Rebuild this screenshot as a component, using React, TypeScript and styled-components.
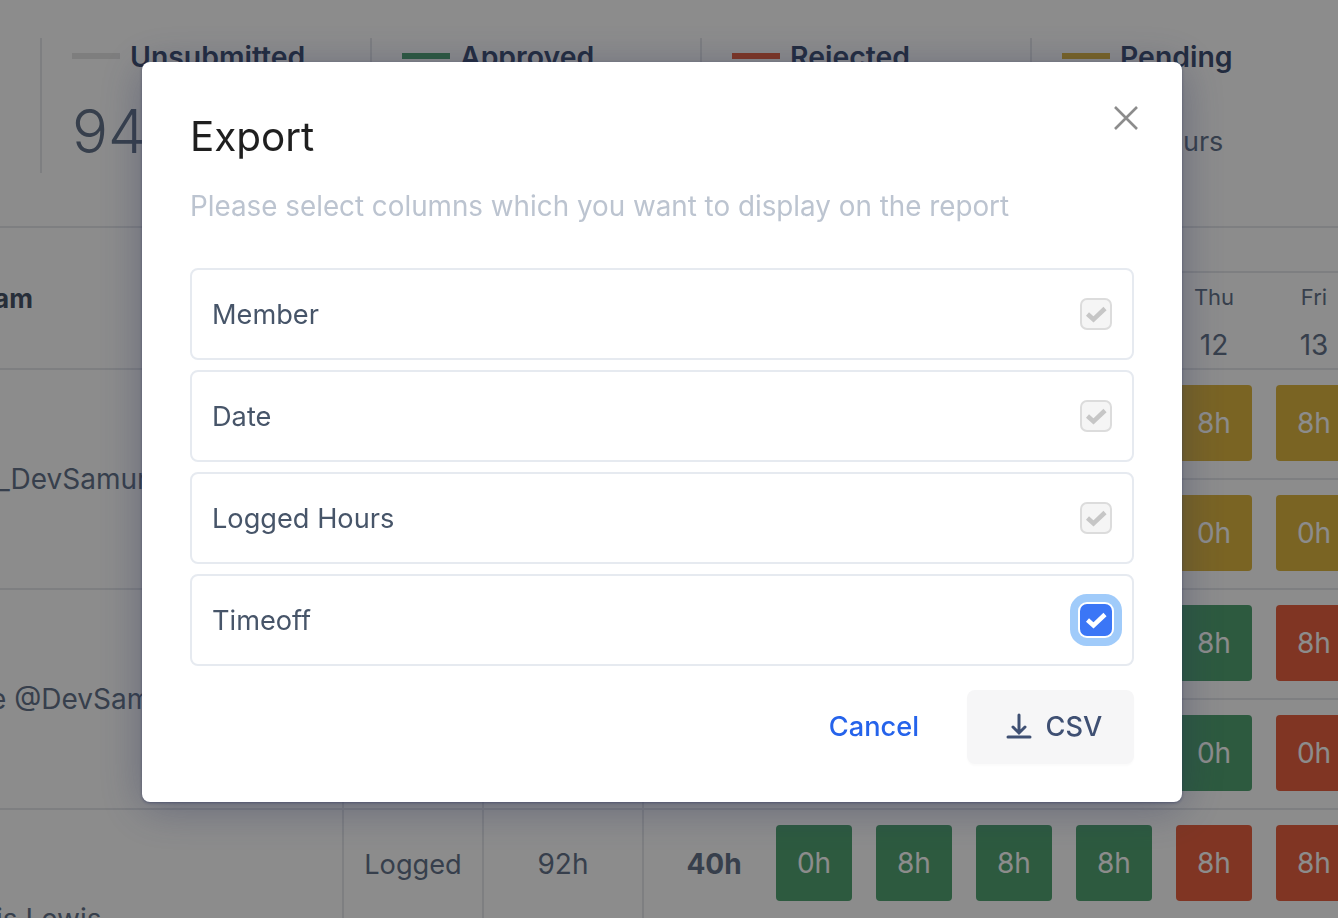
import React from 'react';
import styled, { createGlobalStyle } from 'styled-components';

const GlobalStyle = createGlobalStyle`
  html, body {
    margin: 0;
    padding: 0;
    height: 918px;
    overflow: hidden;
    background: #fff;
    font-family: Inter, "Noto Sans", sans-serif;
  }
  * { box-sizing: border-box; }
`

const Page = styled.div`
  width: 1338px;
  height: 918px;
  overflow: hidden;
  padding-top: 38px;
  color: #475569;
`

const StatsBar = styled.div`
  display: flex;
  margin-left: 40px;
  height: 135px;
  margin-bottom: 53px;
`

const Stat = styled.div`
  width: 330px;
  flex-shrink: 0;
  border-left: 2px solid #e5e7eb;
  padding-left: 30px;
`

const StatHead = styled.div`
  display: flex;
  align-items: center;
  gap: 10px;
  height: 36px;
`

const StatBarMark = styled.span<{ $color: string }>`
  width: 48px;
  height: 6px;
  background: ${p => p.$color};
`

const StatLabel = styled.span`
  font-size: 28.4px;
  font-weight: 600;
  color: #3f5073;
`

const StatValue = styled.div`
  display: flex;
  align-items: flex-end;
  gap: 14px;
  margin-top: 21px;
`

const StatNumber = styled.span`
  font-size: 60px;
  font-weight: 300;
  line-height: 72px;
  color: #64748b;
`

const StatUnit = styled.span`
  font-size: 27px;
  line-height: 34px;
  margin-bottom: 8px;
  color: #64748b;
`

const Table = styled.div`
  border-top: 2px solid #e5e7eb;
`

const HeadRow = styled.div`
  display: grid;
  grid-template-columns: 342px 1fr;
  height: 142px;
  border-bottom: 2px solid #e5e7eb;
`

const TeamCell = styled.div`
  display: flex;
  align-items: center;
  font-size: 26px;
  font-weight: 700;
  color: #475569;
  overflow: hidden;
`

const TeamText = styled.span`
  margin-left: -37px;
`

const HeadRight = styled.div`
  display: flex;
  flex-direction: column;
`

const HeadTop = styled.div`
  height: 45px;
  border-bottom: 2px solid #e5e7eb;
`

const Days = styled.div`
  display: flex;
  gap: 24px;
  padding-left: 434px;
`

const Day = styled.div`
  width: 76px;
  flex-shrink: 0;
  display: flex;
  flex-direction: column;
  align-items: center;
  padding-top: 10px;
  color: #64748b;
`

const DayName = styled.span`
  font-size: 22px;
  line-height: 28px;
`

const DayNumber = styled.span`
  font-size: 28px;
  line-height: 34px;
  margin-top: 17px;
`

const MemberRow = styled.div`
  display: grid;
  grid-template-columns: 342px 1fr;
  height: 220px;
  border-bottom: 2px solid #e5e7eb;
`

const NameCell = styled.div`
  display: flex;
  align-items: center;
  overflow: hidden;
  white-space: nowrap;
  font-size: 28px;
  color: #64748b;
`

const NameText = styled.span<{ $shift: number }>`
  margin-left: ${p => p.$shift}px;
`

const SubRows = styled.div`
  display: flex;
  flex-direction: column;
`

const SubRow = styled.div`
  display: flex;
  flex: 1;
  border-left: 2px solid #e5e7eb;
  &:not(:last-child) {
    border-bottom: 2px solid #e5e7eb;
  }
`

const LabelCell = styled.div`
  width: 140px;
  display: flex;
  align-items: center;
  justify-content: center;
  border-right: 2px solid #e5e7eb;
  font-size: 27.2px;
  color: #64748b;
`

const HoursCell = styled(LabelCell)`
  width: 160px;
  font-size: 28px;
`

const TotalCell = styled.div`
  width: 132px;
  padding-left: 8px;
  display: flex;
  align-items: center;
  justify-content: center;
  font-size: 28px;
  font-weight: 700;
  color: #64748b;
`

const Tiles = styled.div`
  display: flex;
  align-items: center;
  gap: 24px;
  padding-bottom: 2px;
`

const Tile = styled.div<{ $color: string }>`
  width: 76px;
  height: 76px;
  flex-shrink: 0;
  display: flex;
  align-items: center;
  justify-content: center;
  border-radius: 4px;
  background: ${p => p.$color};
  color: #fff;
  font-size: 28px;
`

const Overlay = styled.div`
  position: fixed;
  inset: 0;
  background: rgba(0, 0, 0, 0.45);
`

const Modal = styled.div`
  position: fixed;
  left: 142px;
  top: 62px;
  width: 1040px;
  height: 740px;
  padding: 48px;
  border-radius: 8px;
  background: #fff;
  box-shadow: 0 6px 44px rgba(40, 48, 90, 0.38), 0 1px 3px rgba(40, 48, 90, 0.5);
`

const CloseButton = styled.button`
  position: absolute;
  top: 42px;
  right: 42px;
  width: 28px;
  height: 28px;
  padding: 0;
  border: 0;
  background: none;
  color: #8c8c8c;
`

const Title = styled.h2`
  margin: 0;
  font-size: 40.4px;
  line-height: 54px;
  font-weight: 400;
  color: #1f1f1f;
`

const Subtitle = styled.p`
  margin: 25px 0 0;
  font-size: 27.8px;
  line-height: 34px;
  color: #bcc4d0;
`

const Options = styled.div`
  display: flex;
  flex-direction: column;
  gap: 10px;
  margin-top: 45px;
`

const Option = styled.label`
  display: flex;
  align-items: center;
  justify-content: space-between;
  height: 92px;
  padding: 0 20px;
  border: 2px solid #e6eaf0;
  border-radius: 8px;
  font-size: 27.2px;
  color: #475569;
`

const CheckBox = styled.span<{ $active?: boolean }>`
  width: 32px;
  height: 32px;
  display: flex;
  flex-shrink: 0;
  border-radius: 7px;
  border: ${p => (p.$active ? '0' : '2px solid #dcdcdc')};
  background: ${p => (p.$active ? '#3b76f6' : '#f5f5f5')};
  color: ${p => (p.$active ? '#fff' : '#c6c6c6')};
  box-shadow: ${p => (p.$active ? '0 0 0 2px #fff, 0 0 0 10px #a0cbfa' : 'none')};
`

const CheckIcon = styled.svg<{ $active?: boolean }>`
  width: 32px;
  height: 32px;
  flex-shrink: 0;
  margin: ${p => (p.$active ? '0' : '-2px')};
`

const Footer = styled.div`
  display: flex;
  justify-content: flex-end;
  align-items: center;
  gap: 48px;
  margin-top: 24px;
`

const CancelButton = styled.button`
  padding: 0 0 2px;
  border: 0;
  background: none;
  font: inherit;
  font-size: 27.2px;
  font-weight: 500;
  color: #2563eb;
`

const CsvButton = styled.button`
  width: 167px;
  height: 74px;
  display: flex;
  align-items: center;
  justify-content: center;
  gap: 14px;
  padding: 0 0 2px 7px;
  border: 0;
  border-radius: 8px;
  background: #f6f6f7;
  box-shadow: 0 2px 2px rgba(0, 0, 0, 0.02);
  font: inherit;
  font-size: 27.2px;
  font-weight: 500;
  color: #3f5073;
`

const YELLOW = '#deb641'
const GREEN = '#52a473'
const RED = '#e96240'

const STATS = [
  { label: 'Unsubmitted', color: '#e5e5e5', value: '94', unit: 'hours' },
  { label: 'Approved', color: GREEN, value: '80', unit: 'hours' },
  { label: 'Rejected', color: RED, value: '16', unit: 'hours' },
  { label: 'Pending', color: YELLOW, value: '40', unit: 'hours' },
]

const DAYS = [
  { name: 'Sun', date: 8 },
  { name: 'Mon', date: 9 },
  { name: 'Tue', date: 10 },
  { name: 'Wed', date: 11 },
  { name: 'Thu', date: 12 },
  { name: 'Fri', date: 13 },
]

const MEMBERS = [
  {
    name: 'Samuel_DevSamurai',
    shift: -101,
    rows: [
      { label: 'Logged', hours: '92h', total: '40h', tiles: ['8h', '8h', '8h', '8h', '8h', '8h'], colors: [GREEN, GREEN, GREEN, GREEN, YELLOW, YELLOW] },
      { label: 'Timeoff', hours: '0h', total: '0h', tiles: ['0h', '0h', '0h', '0h', '0h', '0h'], colors: [GREEN, GREEN, GREEN, GREEN, YELLOW, YELLOW] },
    ],
  },
  {
    name: 'Julie @DevSamurai',
    shift: -56,
    rows: [
      { label: 'Logged', hours: '92h', total: '40h', tiles: ['8h', '8h', '8h', '8h', '8h', '8h'], colors: [GREEN, GREEN, GREEN, GREEN, GREEN, RED] },
      { label: 'Timeoff', hours: '0h', total: '0h', tiles: ['0h', '0h', '0h', '0h', '0h', '0h'], colors: [GREEN, GREEN, GREEN, GREEN, GREEN, RED] },
    ],
  },
  {
    name: 'Chris Lewis',
    shift: -52,
    rows: [
      { label: 'Logged', hours: '92h', total: '40h', tiles: ['0h', '8h', '8h', '8h', '8h', '8h'], colors: [GREEN, GREEN, GREEN, GREEN, RED, RED] },
      { label: 'Timeoff', hours: '0h', total: '0h', tiles: ['0h', '0h', '0h', '0h', '0h', '0h'], colors: [GREEN, GREEN, GREEN, GREEN, RED, RED] },
    ],
  },
]

const OPTIONS = ['Member', 'Date', 'Logged Hours', 'Timeoff']

function App() {
  return (
    <>
      <GlobalStyle />
      <Page>
        <StatsBar>
          {STATS.map(stat => (
            <Stat key={stat.label}>
              <StatHead>
                <StatBarMark $color={stat.color} />
                <StatLabel>{stat.label}</StatLabel>
              </StatHead>
              <StatValue>
                <StatNumber>{stat.value}</StatNumber>
                <StatUnit>{stat.unit}</StatUnit>
              </StatValue>
            </Stat>
          ))}
        </StatsBar>
        <Table>
          <HeadRow>
            <TeamCell><TeamText>Team</TeamText></TeamCell>
            <HeadRight>
              <HeadTop />
              <Days>
                {DAYS.map(day => (
                  <Day key={day.name}>
                    <DayName>{day.name}</DayName>
                    <DayNumber>{day.date}</DayNumber>
                  </Day>
                ))}
              </Days>
            </HeadRight>
          </HeadRow>
          {MEMBERS.map(member => (
            <MemberRow key={member.name}>
              <NameCell>
                <NameText $shift={member.shift}>{member.name}</NameText>
              </NameCell>
              <SubRows>
                {member.rows.map(row => (
                  <SubRow key={row.label}>
                    <LabelCell>{row.label}</LabelCell>
                    <HoursCell>{row.hours}</HoursCell>
                    <TotalCell>{row.total}</TotalCell>
                    <Tiles>
                      {row.tiles.map((tile, idx) => (
                        <Tile key={idx} $color={row.colors[idx]}>{tile}</Tile>
                      ))}
                    </Tiles>
                  </SubRow>
                ))}
              </SubRows>
            </MemberRow>
          ))}
        </Table>
      </Page>
      <Overlay />
      <Modal>
        <CloseButton aria-label="Close">
          <svg width="28" height="28" viewBox="0 0 28 28" stroke="currentColor" strokeWidth="2.6" fill="none">
            <path d="M3 3l22 22M25 3L3 25" />
          </svg>
        </CloseButton>
        <Title>Export</Title>
        <Subtitle>Please select columns which you want to display on the report</Subtitle>
        <Options>
          {OPTIONS.map(option => {
            const active = option === 'Timeoff'
            return (
              <Option key={option}>
                {option}
                <CheckBox $active={active}>
                  <CheckIcon $active={active} viewBox="0 0 32 32" fill="none" stroke="currentColor" strokeWidth="4.5">
                    <path d="M7.5 16l6 5.5L25 10.5" />
                  </CheckIcon>
                </CheckBox>
              </Option>
            )
          })}
        </Options>
        <Footer>
          <CancelButton>Cancel</CancelButton>
          <CsvButton>
            <svg width="26" height="26" viewBox="0 0 26 26" fill="none" stroke="currentColor" strokeWidth="3" strokeLinecap="round">
              <path d="M13 2v17M7 14l6 6 6-6M2 24h22" />
            </svg>
            CSV
          </CsvButton>
        </Footer>
      </Modal>
    </>
  );
}

export default App;
